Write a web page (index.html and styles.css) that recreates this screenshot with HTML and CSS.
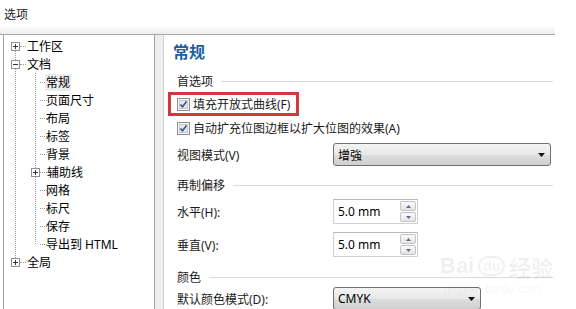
FILE: index.html
```html
<!DOCTYPE html>
<html lang="zh-CN">
<head>
  <meta charset="UTF-8">
  <title>选项</title>
  <link rel="stylesheet" href="styles.css">
</head>
<body>
  <div class="header">选项</div>

  <div class="main">
    <!-- Árvore de categorias -->
    <div class="tree-box">
      <ul class="tree">
        <li><div class="row l1"><svg class="exp" width="9" height="9"><rect x=".5" y=".5" width="8" height="8" fill="#fff" stroke="#919191"/><path d="M2 4.5h5M4.5 2v5" stroke="#333"/></svg><span class="label">工作区</span></div></li>
        <li><div class="row l1"><svg class="exp" width="9" height="9"><rect x=".5" y=".5" width="8" height="8" fill="#fff" stroke="#919191"/><path d="M2 4.5h5" stroke="#333"/></svg><span class="label">文档</span></div>
          <ul class="sub">
            <li><div class="row l2 leaf"><span class="label sel">常规</span></div></li>
            <li><div class="row l2 leaf"><span class="label">页面尺寸</span></div></li>
            <li><div class="row l2 leaf"><span class="label">布局</span></div></li>
            <li><div class="row l2 leaf"><span class="label">标签</span></div></li>
            <li><div class="row l2 leaf"><span class="label">背景</span></div></li>
            <li><div class="row l2"><svg class="exp" width="9" height="9"><rect x=".5" y=".5" width="8" height="8" fill="#fff" stroke="#919191"/><path d="M2 4.5h5M4.5 2v5" stroke="#333"/></svg><span class="label">辅助线</span></div></li>
            <li><div class="row l2 leaf"><span class="label">网格</span></div></li>
            <li><div class="row l2 leaf"><span class="label">标尺</span></div></li>
            <li><div class="row l2 leaf"><span class="label">保存</span></div></li>
            <li><div class="row l2 leaf"><span class="label">导出到 HTML</span></div></li>
          </ul>
        </li>
        <li><div class="row l1"><svg class="exp" width="9" height="9"><rect x=".5" y=".5" width="8" height="8" fill="#fff" stroke="#919191"/><path d="M2 4.5h5M4.5 2v5" stroke="#333"/></svg><span class="label">全局</span></div></li>
      </ul>
    </div>

    <div class="split"></div>

    <!-- Painel de opções -->
    <div class="panel">
      <h1>常规</h1>

      <div class="group g-pref">首选项</div>

      <div class="line check1">
        <span class="hl">
          <svg class="cb" width="13" height="13"><rect x=".5" y=".5" width="12" height="12" fill="#f4f4f4" stroke="#8f8f8f"/><rect x="2.5" y="2.5" width="8" height="8" fill="#e4e8ee" stroke="#c2c8d2"/><path d="M3.5 6.5l2 2.3 4-5.3" fill="none" stroke="#3d4f7c" stroke-width="1.6"/></svg>
          填充开放式曲线(F)
        </span>
      </div>

      <div class="line check2">
        <svg class="cb" width="13" height="13"><rect x=".5" y=".5" width="12" height="12" fill="#f4f4f4" stroke="#8f8f8f"/><rect x="2.5" y="2.5" width="8" height="8" fill="#e4e8ee" stroke="#c2c8d2"/><path d="M3.5 6.5l2 2.3 4-5.3" fill="none" stroke="#3d4f7c" stroke-width="1.6"/></svg>
        自动扩充位图边框以扩大位图的效果(A)
      </div>

      <div class="line field view">
        <span class="name">视图模式(V)</span>
        <div class="select wide"><span>增強</span><svg width="7" height="4"><path d="M0 0h7L3.5 4z" fill="#111"/></svg></div>
      </div>

      <div class="group g-dup">再制偏移</div>

      <div class="line field spin-row r-h">
        <span class="name">水平(H):</span>
        <div class="spin"><span>5.0 mm</span>
          <div class="btns">
            <div class="btn"><svg width="5" height="3"><path d="M0 3h5L2.5 0z" fill="#5a6c8e"/></svg></div>
            <div class="btn"><svg width="5" height="3"><path d="M0 0h5L2.5 3z" fill="#5a6c8e"/></svg></div>
          </div>
        </div>
      </div>

      <div class="line field spin-row r-v">
        <span class="name">垂直(V):</span>
        <div class="spin"><span>5.0 mm</span>
          <div class="btns">
            <div class="btn"><svg width="5" height="3"><path d="M0 3h5L2.5 0z" fill="#5a6c8e"/></svg></div>
            <div class="btn"><svg width="5" height="3"><path d="M0 0h5L2.5 3z" fill="#5a6c8e"/></svg></div>
          </div>
        </div>
      </div>

      <div class="group g-color">颜色</div>

      <div class="line field r-mode">
        <span class="name">默认颜色模式(D):</span>
        <div class="select narrow"><span>CMYK</span><svg width="7" height="4"><path d="M0 0h7L3.5 4z" fill="#111"/></svg></div>
      </div>
    </div>
  </div>

  <!-- marca d'água -->
  <div class="mark">
    <div class="mark-top">Bai<span class="paw">du</span>经验</div>
    <div class="mark-url">jingyan.baidu.com</div>
  </div>
</body>
</html>
```

FILE: styles.css
```css
/* Base */
* { box-sizing: border-box; margin: 0; padding: 0; }
body {
  width: 576px;
  height: 309px;
  overflow: hidden;
  position: relative;
  background: #fff;
  color: #1b1b1b;
  font-family: "Noto Sans", "Noto Sans CJK SC", sans-serif;
  font-size: 12px;
}

/* Cabeçalho */
.header {
  width: 555px;
  height: 35px;
  padding-left: 4px;
  line-height: 30px;
  background: linear-gradient(#fff 75%, #ececec);
  border-bottom: 1px solid #a9a9a9;
}

.main {
  display: flex;
  height: 274px;
}

/* Árvore */
.tree-box {
  margin-left: 3px;
  width: 152px;
  border-left: 1px solid #a4a4a4;
  border-right: 1px solid #a4a4a4;
  background: #fff;
  padding-top: 2px;
}
.tree, .sub { list-style: none; position: relative; }
.tree::before {
  content: "";
  position: absolute;
  left: 11px;
  top: 9px;
  bottom: 9px;
  border-left: 1px dotted #9a9a9a;
}
.sub::before {
  content: "";
  position: absolute;
  left: 31px;
  top: 0;
  bottom: 9px;
  border-left: 1px dotted #9a9a9a;
}
.row {
  position: relative;
  height: 18px;
  display: flex;
  align-items: center;
  color: #000;
}
.row::before {
  content: "";
  position: absolute;
  top: 9px;
  border-top: 1px dotted #9a9a9a;
}
.l1 { padding-left: 7px; }
.l1::before { left: 16px; width: 6px; }
.l2 { padding-left: 27px; }
.l2::before { left: 36px; width: 7px; }
.leaf { padding-left: 41px; }
.exp { position: relative; z-index: 1; margin-right: 6px; flex: none; }
.label { line-height: 17px; padding: 0 1px; position: relative; }
.label.sel { background: #ececec; }

.split {
  width: 9px;
  background: #eeeeee;
  border-right: 1px solid #d2d2d2;
}

/* Painel */
.panel {
  width: 391px;
  background: #fff;
  padding-left: 9px;
}
h1 {
  margin-top: 7px;
  height: 20px;
  line-height: 20px;
  font-size: 16px;
  font-weight: bold;
  color: #1d5f9f;
}
.group {
  display: flex;
  align-items: center;
  height: 18px;
  padding-left: 4px;
}
.group::after {
  content: "";
  flex: 1;
  height: 1px;
  margin: 0 2px 0 8px;
  background: #dadada;
}
.g-pref { margin-top: 10px; }
.g-dup { margin-top: 10px; }
.g-color { margin-top: 11px; }

.line {
  display: flex;
  align-items: center;
  height: 18px;
  padding-left: 4px;
}
.cb { margin-right: 3px; flex: none; }
.check1 { margin-top: 5px; }
.check2 { margin-top: 6px; }
.hl {
  display: flex;
  align-items: center;
  height: 24px;
  margin-left: -9px;
  padding: 0 6px 0 6px;
  border: 3px solid #d2383d;
}

.field .name { width: 156px; }
.view { margin-top: 6px; height: 23px; }
.r-h { margin-top: 5px; height: 25px; }
.r-v { margin-top: 8px; height: 25px; }
.r-mode { margin-top: 1px; height: 23px; }

.select {
  height: 23px;
  display: flex;
  align-items: center;
  justify-content: space-between;
  padding: 0 5px 0 4px;
  border: 1px solid #707070;
  border-radius: 3px;
  background: linear-gradient(#f4f4f4, #e9e9e9 50%, #dddddd 51%, #d0d0d0);
  color: #000;
}
.wide { width: 218px; }
.narrow { width: 148px; }

.spin {
  width: 85px;
  height: 25px;
  display: flex;
  align-items: center;
  justify-content: space-between;
  padding: 0 1px 0 4px;
  border: 1px solid #d0d0d0;
  border-top-color: #b9b9b9;
  background: #fff;
  color: #000;
}
.btns { display: flex; flex-direction: column; gap: 1px; }
.btn {
  width: 16px;
  height: 10px;
  display: flex;
  align-items: center;
  justify-content: center;
  border: 1px solid #c4c4c4;
  border-radius: 2px;
  background: linear-gradient(#fafafa, #e4e4e4);
}

/* Marca d'água */
.mark {
  position: absolute;
  left: 440px;
  top: 250px;
  color: rgba(0, 0, 0, 0.06);
  font-family: "Liberation Sans", sans-serif;
}
.mark-top { font-size: 22px; font-weight: bold; display: flex; align-items: center; }
.paw {
  display: inline-block;
  margin: 0 4px;
  padding: 0 3px;
  font-size: 14px;
  border: 2px solid rgba(0, 0, 0, 0.06);
  border-radius: 10px;
}
.mark-url { font-size: 12px; margin-left: 4px; }
```
